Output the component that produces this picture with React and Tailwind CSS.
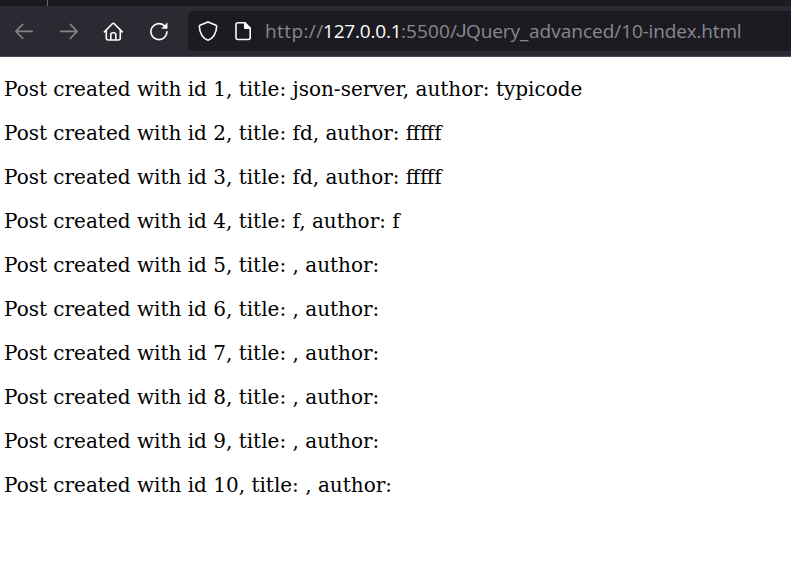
const posts = [
  { id: 1, title: 'json-server', author: 'typicode' },
  { id: 2, title: 'fd', author: 'fffff' },
  { id: 3, title: 'fd', author: 'fffff' },
  { id: 4, title: 'f', author: 'f' },
  { id: 5, title: '', author: '' },
  { id: 6, title: '', author: '' },
  { id: 7, title: '', author: '' },
  { id: 8, title: '', author: '' },
  { id: 9, title: '', author: '' },
  { id: 10, title: '', author: '' },
];

function Icon({ children, className = '' }) {
  return (
    <svg
      viewBox="0 0 20 20"
      fill="none"
      stroke="currentColor"
      strokeWidth="1.6"
      strokeLinecap="round"
      strokeLinejoin="round"
      className={`h-5 w-5 shrink-0 ${className}`}
    >
      {children}
    </svg>
  );
}

function Toolbar() {
  return (
    <div className="flex h-[50px] items-center bg-[#2b2a33] pl-3.5 text-[#fbfbfe]">
      <Icon className="text-[#838288]">
        <path d="M18.2 10.4H2M8.7 3.4 1.9 10.4 8.7 17.4" />
      </Icon>
      <Icon className="ml-[25px] text-[#838288]">
        <path d="M1.8 10.4H18M11.3 3.4l6.8 7L11.3 17.4" />
      </Icon>
      <Icon className="ml-[24px]">
        <path d="M1.4 10.9 9.3 2.8q1-1 2 0l7.9 8.1M3.3 9.5V17q0 2 2 2h10q2 0 2-2V9.5M7.8 18.8v-5q0-2 2-2h1q2 0 2 2v5" />
      </Icon>
      <Icon className="ml-[26px]">
        <path d="M17.9 10.8a8 8 0 1 1-2.5-6l1.5 1.5" />
        <path d="M18.2 2.2v5.2h-5.2Z" fill="currentColor" strokeWidth="0.5" />
      </Icon>
      <div className="ml-[19px] flex h-10 flex-1 items-center rounded-l-[5px] bg-[#1c1b22] pl-2.5">
        <Icon>
          <path d="M10 .9 18 4.2q.7.3.7 1C18.3 12.5 14.8 17.3 10 19.2 5.2 17.3 1.7 12.5 1.3 5.2q0-.7.7-1Z" />
        </Icon>
        <Icon className="ml-[15px]">
          <path d="M11.8 1.8H5q-2 0-2 2v12.7q0 2 2 2h10.2q2 0 2-2V7.2Z" />
          <path d="M11.8 1.8v5.4h5.4Z" fill="currentColor" />
        </Icon>
        <div className="ml-[12px] flex whitespace-pre font-['Open_Sans',sans-serif] text-[19px] leading-10 text-[#89888f]">
          <span className="w-[58px] tracking-[0.4px]">http://</span>
          <span className="w-[78px] tracking-[-0.2px] text-[#fbfbfe]">127.0.0.1</span>
          <span className="w-[55px] tracking-[0.1px]">:5500/</span>
          <span className="w-[10px] font-['Roboto',sans-serif]">J</span>
          <span className="w-[63px] tracking-[-0.1px]">Query_</span>
          <span className="tracking-[0px]">advanced/</span>
          <span className="tracking-[-0.16px]">10-index.html</span>
        </div>
      </div>
    </div>
  );
}

export default function App() {
  return (
    <div className="h-[576px] w-full overflow-hidden bg-white">
      <header className="border-b border-[#51485d]">
        <div className="h-1.5 bg-[#1c1b22] pl-[47px]">
          <div className="h-1.5 w-px bg-[#67666e]" />
        </div>
        <Toolbar />
      </header>
      <main className="pl-1 pt-2.5 font-['DejaVu_Serif',serif] text-xl text-black">
        {posts.map((post) => (
          <p key={post.id} className="h-11 whitespace-pre leading-[44px]">
            {`Post created with id ${post.id}, title: ${post.title}, author: ${post.author}`}
          </p>
        ))}
      </main>
    </div>
  );
}
